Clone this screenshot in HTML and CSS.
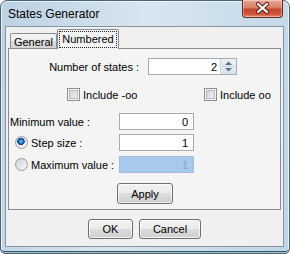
FILE: index.html
```html
<!DOCTYPE html>
<html lang="en">
<head>
  <meta charset="UTF-8">
  <title>States Generator</title>
  <link rel="stylesheet" href="styles.css">
</head>
<body>
  <div class="window">
    <div class="titlebar">
      <span class="title">States Generator</span>
      <div class="close">
        <svg width="41" height="18" viewBox="0 0 41 18">
          <path d="M16 5 L25 13 M25 5 L16 13" stroke="#5a1e16" stroke-width="4.2" stroke-linecap="round"/>
          <path d="M16 5 L25 13 M25 5 L16 13" stroke="#ffffff" stroke-width="2.2" stroke-linecap="round"/>
        </svg>
      </div>
    </div>

    <div class="client">
      <div class="tabs">
        <div class="tab">General</div>
        <div class="tab active"><span class="focus">Numbered</span></div>
      </div>

      <div class="panel">
        <div class="states-row">
          <span class="states-label">Number of states :</span>
          <div class="spin">
            <input class="spin-field" type="text" value="2">
            <div class="spin-btns">
              <svg width="15" height="15" viewBox="0 0 15 15">
                <path d="M4 6 L7.5 2.5 L11 6 Z" fill="#5a6f8f"/>
                <path d="M4 9 L7.5 12.5 L11 9 Z" fill="#5a6f8f"/>
                <line x1="1" y1="7.5" x2="14" y2="7.5" stroke="#c9d3de" stroke-width="1"/>
              </svg>
            </div>
          </div>
        </div>

        <div class="checks-row">
          <label class="check"><span class="box"></span>Include -oo</label>
          <label class="check"><span class="box"></span>Include oo</label>
        </div>

        <div class="value-row first">
          <span class="value-label">Minimum value :</span>
          <input class="field" type="text" value="0">
        </div>
        <div class="value-row step">
          <label class="radio-label"><span class="radio checked"></span>Step size :</label>
          <input class="field" type="text" value="1">
        </div>
        <div class="value-row max">
          <label class="radio-label"><span class="radio"></span>Maximum value :</label>
          <input class="field disabled" type="text" value="1" disabled>
        </div>

        <button class="btn apply">Apply</button>
      </div>

      <div class="footer">
        <button class="btn ok">OK</button>
        <button class="btn cancel">Cancel</button>
      </div>
    </div>
  </div>
</body>
</html>
```

FILE: styles.css
```css
body {
  margin: 0;
  font-family: "Liberation Sans", Arial, sans-serif;
  font-size: 11px;
  color: #000;
}
.window {
  width: 290px;
  height: 254px;
  box-sizing: border-box;
  display: flex;
  flex-direction: column;
  padding: 0 5px 6px 4px;
  border: 1px solid #4d6573;
  border-radius: 7px 7px 5px 5px;
  background: linear-gradient(100deg, #bcd1e3 0%, #d7e5f0 45%, #cadcea 75%, #c0d5e6 100%);
  box-shadow: inset 0 0 0 1px rgba(255,255,255,0.6), inset 0 -2px 0 #2d5a66;
}
.titlebar {
  height: 25px;
  display: flex;
  align-items: flex-start;
}
.title {
  font-size: 12px;
  line-height: 14px;
  margin: 6px 0 0 3px;
}
.close {
  margin: -1px 1px 0 auto;
  width: 41px;
  height: 18px;
  box-sizing: border-box;
  border: 1px solid #6a2b21;
  border-top: none;
  border-radius: 0 0 4px 4px;
  background: linear-gradient(#e9a898 0%, #d77e69 45%, #c2442c 55%, #d05a3f 85%, #e39079 100%);
  box-shadow: inset 0 0 0 1px rgba(255,255,255,0.35);
  overflow: hidden;
}
.close svg {
  display: block;
  margin: -1px 0 0 -1px;
}
.client {
  flex: 1;
  background: #f0f0f0;
  border: 1px solid #8594a0;
}
.tabs {
  display: flex;
  align-items: flex-end;
  height: 19px;
  margin: 2px 0 0 4px;
}
.tab {
  width: 47px;
  height: 15px;
  box-sizing: border-box;
  border: 1px solid #898c95;
  border-bottom: none;
  border-radius: 2px 2px 0 0;
  padding-top: 1px;
  line-height: 14px;
  text-align: center;
  background: linear-gradient(#f4f4f4, #ececec 50%, #dedede 51%, #d2d2d2);
}
.tab.active {
  width: 62px;
  height: 20px;
  margin-bottom: -1px;
  padding: 1px 1px 0 1px;
  position: relative;
  z-index: 1;
  background: #f4f4f4;
}
.focus {
  display: block;
  height: 17px;
  box-sizing: border-box;
  border: 1px dotted #222;
  line-height: 15px;
}
.panel {
  margin: 0 2px;
  border: 1px solid #898c95;
  background: #f4f4f4;
  padding-bottom: 5px;
}
.states-row {
  display: flex;
  align-items: center;
  height: 17px;
  margin-top: 9px;
}
.states-label {
  width: 130px;
  text-align: right;
  margin-right: 9px;
}
.spin {
  display: flex;
  width: 89px;
  height: 17px;
  box-sizing: border-box;
  border: 1px solid #a5acb5;
  background: #fff;
}
.spin-field {
  width: 72px;
  height: 15px;
  box-sizing: border-box;
  border: none;
  border-right: 1px solid #d0d6dd;
  padding: 0 3px 0 0;
  margin: 0;
  font: inherit;
  text-align: right;
  background: #fff;
}
.spin-btns {
  width: 15px;
  height: 15px;
  background: linear-gradient(#eef2f6, #dbe3eb);
}
.spin-btns svg {
  display: block;
}
.checks-row {
  display: grid;
  grid-template-columns: 137px auto;
  align-items: center;
  height: 17px;
  margin: 11px 0 0 58px;
}
.check {
  display: flex;
  align-items: center;
  gap: 3px;
}
.box {
  width: 13px;
  height: 13px;
  box-sizing: border-box;
  border: 1px solid #8e8f8f;
  background: linear-gradient(135deg, #c9cdd3, #f6f6f6);
  box-shadow: inset 0 0 0 1px #f4f4f4, inset 0 0 0 2px #b7bcc2;
}
.value-row {
  display: flex;
  align-items: center;
  height: 17px;
}
.value-row.first {
  margin-top: 10px;
}
.value-row.step {
  margin-top: 4px;
}
.value-row.max {
  margin-top: 5px;
}
.value-label {
  width: 109px;
  padding-left: 1px;
}
.radio-label {
  width: 104px;
  padding-left: 6px;
  display: flex;
  align-items: center;
  gap: 3px;
}
.radio {
  width: 13px;
  height: 13px;
  box-sizing: border-box;
  border-radius: 50%;
  border: 1px solid #979a9f;
  background: linear-gradient(135deg, #cfd2d7, #f8f8f8);
}
.radio.checked {
  background: radial-gradient(circle at 45% 40%, #9ad6ff 0, #2e83d6 1.5px, #0d3f84 3.5px, #e9ecef 4px, #e9ecef 5px, transparent 5.5px),
    linear-gradient(135deg, #cfd2d7, #f8f8f8);
}
.field {
  width: 75px;
  height: 17px;
  box-sizing: border-box;
  border: 1px solid #a5acb5;
  background: #fff;
  padding: 0 5px 0 0;
  margin: 0;
  font: inherit;
  color: #000;
  text-align: right;
}
.field.disabled {
  background: #a9c9ec;
  border-color: #a3bcd9;
  color: #86a2c4;
}
.btn {
  box-sizing: border-box;
  height: 20px;
  padding: 0;
  font: inherit;
  color: #000;
  border: 1px solid #707070;
  border-radius: 3px;
  background: linear-gradient(#f2f2f2 0%, #ebebeb 49%, #dddddd 50%, #cfcfcf 100%);
  box-shadow: inset 0 0 0 1px rgba(255,255,255,0.7);
}
.apply {
  display: block;
  width: 56px;
  height: 21px;
  margin: 10px 0 0 108px;
}
.footer {
  display: flex;
  justify-content: center;
  gap: 6px;
  margin-top: 9px;
}
.ok {
  width: 45px;
}
.cancel {
  width: 62px;
}
```
